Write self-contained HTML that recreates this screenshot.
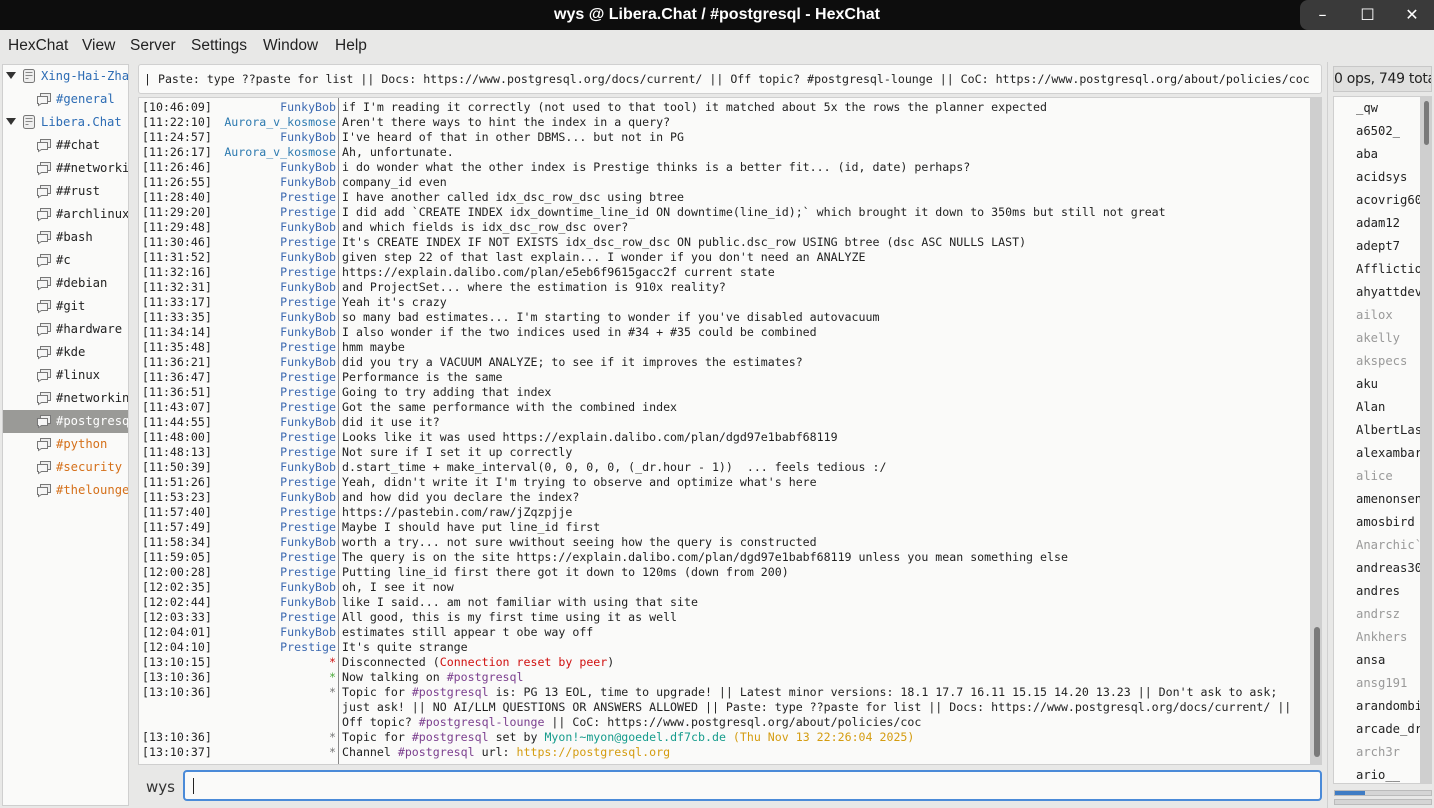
<!DOCTYPE html>
<html><head><meta charset="utf-8"><style>
*{margin:0;padding:0;box-sizing:border-box}
body{width:1434px;height:808px;overflow:hidden;background:#e8e8e7;font-family:"DejaVu Sans","Liberation Sans",sans-serif;position:relative}
.title{position:absolute;left:0;top:0;width:1434px;height:30px;background:#0d0d0d;color:#fff;font-size:16px;font-weight:bold;text-align:center;line-height:30px;font-family:"Liberation Sans",sans-serif}
.wbtn{position:absolute;top:0;width:45px;height:30px;background:#3a3a3a;color:#fff;text-align:center;line-height:30px;font-size:16px}
.menu{position:absolute;top:30px;left:0;width:1434px;height:32px;font-size:15.5px;color:#222;line-height:32px;font-family:"Liberation Sans",sans-serif}
.menu span{position:absolute}
.tree{position:absolute;left:2px;top:64px;width:127px;height:742px;background:#fafaf9;border:1px solid #cfcfcf;overflow:hidden;font-family:"DejaVu Sans Mono",monospace;font-size:12.2px}
.ti{position:absolute;height:23px;line-height:23px;white-space:nowrap;color:#222}
.ti svg{vertical-align:-4px;margin-right:4px}
.tri{display:inline-block;width:0;height:0;border-left:5px solid transparent;border-right:5px solid transparent;border-top:7px solid #333;margin:0 5px 1px 3px}
.topic{position:absolute;left:138px;top:64px;width:1184px;height:30px;background:#fafaf9;border:1px solid #d0d0d0;border-radius:3px;font-family:"DejaVu Sans Mono",monospace;font-size:11.6px;line-height:28px;padding-left:5px;white-space:nowrap;overflow:hidden;color:#222}
.chat{position:absolute;left:138px;top:97px;width:1173px;height:668px;background:#fafaf9;border:1px solid #cfcfcf;font-family:"DejaVu Sans Mono",monospace;font-size:11.6px;color:#222;overflow:hidden}
.sep{position:absolute;left:199px;top:0;width:1px;height:668px;background:#888}
.lines{position:absolute;left:3px;top:2px}
.r{height:15px;line-height:15px;white-space:pre;position:relative}
.t{position:absolute;left:0;width:70px}
.n{position:absolute;left:70px;width:124px;text-align:right}
.m{position:absolute;left:200px}
.b{color:#3b68b0}.a{color:#2d7ab0}.p{color:#7b3f8e}.red{color:#d01010}.g{color:#4caa3a}.y{color:#d49c10}.tq{color:#169c8c}
.vs{position:absolute;left:1311px;top:97px;width:11px;height:668px;background:#cfcfcf}
.vs i{position:absolute;left:3px;top:530px;width:6px;height:130px;background:#7a7a7a;border-radius:3px}
.wys{position:absolute;left:146px;top:778px;font-size:15px;color:#333}
.inp{position:absolute;left:183px;top:770px;width:1139px;height:31px;background:#fafaf9;border:2px solid #4a8ad8;border-radius:4px}
.inp i{position:absolute;left:8px;top:6px;width:1px;height:16px;background:#222}
.vline{position:absolute;left:1327px;top:62px;width:1px;height:746px;background:#d0d0d0}
.cnt{position:absolute;left:1333px;top:66px;width:99px;height:26px;background:#e0e0df;border:1px solid #c8c8c8;font-size:14px;line-height:24px;white-space:nowrap;overflow:hidden;color:#222;letter-spacing:-0.3px}
.ul{position:absolute;left:1333px;top:96px;width:88px;height:688px;background:#fafaf9;border:1px solid #cfcfcf;font-family:"DejaVu Sans Mono",monospace;font-size:12.2px;overflow:hidden}
.ul div{position:absolute;left:22px;white-space:nowrap;color:#222}
.ul .w{color:#999}
.us{position:absolute;left:1421px;top:96px;width:11px;height:688px;background:#cfcfcf}
.us i{position:absolute;left:3px;top:5px;width:5px;height:44px;background:#7a7a7a;border-radius:3px}
.pb{position:absolute;left:1334px;width:98px;height:6px;background:#d5d5d5;border:1px solid #bbb}
</style></head><body>
<svg width="0" height="0" style="position:absolute"><defs>
<symbol id="bub" viewBox="0 0 16 16"><path d="M4.5 2.5h10v8h-10z" fill="#eee" stroke="#777"/><path d="M1.5 5.5h10v7h-6l-3 2v-2h-1z" fill="#f6f6f6" stroke="#777"/></symbol>
<symbol id="srv" viewBox="0 0 16 16"><rect x="2.5" y="1.5" width="11" height="13" rx="2" fill="#eee" stroke="#777"/><path d="M4.5 4.5h7M4.5 7.5h7M4.5 10.5h3" stroke="#888"/></symbol>
</defs></svg>
<div class="title">wys @ Libera.Chat / #postgresql - HexChat</div>
<div class="wbtn" style="left:1300px;border-radius:8px 0 0 8px">&#8211;</div>
<div class="wbtn" style="left:1345px">&#9744;</div>
<div class="wbtn" style="left:1390px;width:44px">&#10005;</div>
<div class="menu"><span style="left:8px">HexChat</span><span style="left:82px">View</span><span style="left:130px">Server</span><span style="left:191px">Settings</span><span style="left:263px">Window</span><span style="left:335px">Help</span></div>

<div class="tree">
<div class="ti" style="left:0;top:0"><span class="tri"></span><svg width="16" height="16"><use href="#srv"/></svg><span style="color:#2d6cb4">Xing-Hai-Zhang</span></div>
<div class="ti" style="left:33px;top:23px"><svg width="16" height="16"><use href="#bub"/></svg><span style="color:#2d6cb4">#general</span></div>
<div class="ti" style="left:0;top:46px"><span class="tri"></span><svg width="16" height="16"><use href="#srv"/></svg><span style="color:#2d6cb4">Libera.Chat</span></div>
<div class="ti" style="left:33px;top:69px"><svg width="16" height="16"><use href="#bub"/></svg>##chat</div>
<div class="ti" style="left:33px;top:92px"><svg width="16" height="16"><use href="#bub"/></svg>##networking</div>
<div class="ti" style="left:33px;top:115px"><svg width="16" height="16"><use href="#bub"/></svg>##rust</div>
<div class="ti" style="left:33px;top:138px"><svg width="16" height="16"><use href="#bub"/></svg>#archlinux</div>
<div class="ti" style="left:33px;top:161px"><svg width="16" height="16"><use href="#bub"/></svg>#bash</div>
<div class="ti" style="left:33px;top:184px"><svg width="16" height="16"><use href="#bub"/></svg>#c</div>
<div class="ti" style="left:33px;top:207px"><svg width="16" height="16"><use href="#bub"/></svg>#debian</div>
<div class="ti" style="left:33px;top:230px"><svg width="16" height="16"><use href="#bub"/></svg>#git</div>
<div class="ti" style="left:33px;top:253px"><svg width="16" height="16"><use href="#bub"/></svg>#hardware</div>
<div class="ti" style="left:33px;top:276px"><svg width="16" height="16"><use href="#bub"/></svg>#kde</div>
<div class="ti" style="left:33px;top:299px"><svg width="16" height="16"><use href="#bub"/></svg>#linux</div>
<div class="ti" style="left:33px;top:322px"><svg width="16" height="16"><use href="#bub"/></svg>#networking</div>
<div class="ti" style="left:0;top:345px;width:127px;background:#9a9a97;color:#fff;padding-left:33px"><svg width="16" height="16"><use href="#bub"/></svg>#postgresql</div>
<div class="ti" style="left:33px;top:368px;color:#d5701a"><svg width="16" height="16"><use href="#bub"/></svg>#python</div>
<div class="ti" style="left:33px;top:391px;color:#d5701a"><svg width="16" height="16"><use href="#bub"/></svg>#security</div>
<div class="ti" style="left:33px;top:414px;color:#d5701a"><svg width="16" height="16"><use href="#bub"/></svg>#thelounge</div>
</div>

<div class="topic">| Paste: type ??paste for list || Docs: https://www.postgresql.org/docs/current/ || Off topic? #postgresql-lounge || CoC: https://www.postgresql.org/about/policies/coc</div>

<div class="chat"><div class="sep"></div><div class="lines">
<div class="r"><span class="t">[10:46:09]</span><span class="n b">FunkyBob</span><span class="m">if I'm reading it correctly (not used to that tool) it matched about 5x the rows the planner expected</span></div>
<div class="r"><span class="t">[11:22:10]</span><span class="n a">Aurora_v_kosmose</span><span class="m">Aren't there ways to hint the index in a query?</span></div>
<div class="r"><span class="t">[11:24:57]</span><span class="n b">FunkyBob</span><span class="m">I've heard of that in other DBMS... but not in PG</span></div>
<div class="r"><span class="t">[11:26:17]</span><span class="n a">Aurora_v_kosmose</span><span class="m">Ah, unfortunate.</span></div>
<div class="r"><span class="t">[11:26:46]</span><span class="n b">FunkyBob</span><span class="m">i do wonder what the other index is Prestige thinks is a better fit... (id, date) perhaps?</span></div>
<div class="r"><span class="t">[11:26:55]</span><span class="n b">FunkyBob</span><span class="m">company_id even</span></div>
<div class="r"><span class="t">[11:28:40]</span><span class="n b">Prestige</span><span class="m">I have another called idx_dsc_row_dsc using btree</span></div>
<div class="r"><span class="t">[11:29:20]</span><span class="n b">Prestige</span><span class="m">I did add `CREATE INDEX idx_downtime_line_id ON downtime(line_id);` which brought it down to 350ms but still not great</span></div>
<div class="r"><span class="t">[11:29:48]</span><span class="n b">FunkyBob</span><span class="m">and which fields is idx_dsc_row_dsc over?</span></div>
<div class="r"><span class="t">[11:30:46]</span><span class="n b">Prestige</span><span class="m">It's CREATE INDEX IF NOT EXISTS idx_dsc_row_dsc ON public.dsc_row USING btree (dsc ASC NULLS LAST)</span></div>
<div class="r"><span class="t">[11:31:52]</span><span class="n b">FunkyBob</span><span class="m">given step 22 of that last explain... I wonder if you don't need an ANALYZE</span></div>
<div class="r"><span class="t">[11:32:16]</span><span class="n b">Prestige</span><span class="m">https://explain.dalibo.com/plan/e5eb6f9615gacc2f current state</span></div>
<div class="r"><span class="t">[11:32:31]</span><span class="n b">FunkyBob</span><span class="m">and ProjectSet... where the estimation is 910x reality?</span></div>
<div class="r"><span class="t">[11:33:17]</span><span class="n b">Prestige</span><span class="m">Yeah it's crazy</span></div>
<div class="r"><span class="t">[11:33:35]</span><span class="n b">FunkyBob</span><span class="m">so many bad estimates... I'm starting to wonder if you've disabled autovacuum</span></div>
<div class="r"><span class="t">[11:34:14]</span><span class="n b">FunkyBob</span><span class="m">I also wonder if the two indices used in #34 + #35 could be combined</span></div>
<div class="r"><span class="t">[11:35:48]</span><span class="n b">Prestige</span><span class="m">hmm maybe</span></div>
<div class="r"><span class="t">[11:36:21]</span><span class="n b">FunkyBob</span><span class="m">did you try a VACUUM ANALYZE; to see if it improves the estimates?</span></div>
<div class="r"><span class="t">[11:36:47]</span><span class="n b">Prestige</span><span class="m">Performance is the same</span></div>
<div class="r"><span class="t">[11:36:51]</span><span class="n b">Prestige</span><span class="m">Going to try adding that index</span></div>
<div class="r"><span class="t">[11:43:07]</span><span class="n b">Prestige</span><span class="m">Got the same performance with the combined index</span></div>
<div class="r"><span class="t">[11:44:55]</span><span class="n b">FunkyBob</span><span class="m">did it use it?</span></div>
<div class="r"><span class="t">[11:48:00]</span><span class="n b">Prestige</span><span class="m">Looks like it was used https://explain.dalibo.com/plan/dgd97e1babf68119</span></div>
<div class="r"><span class="t">[11:48:13]</span><span class="n b">Prestige</span><span class="m">Not sure if I set it up correctly</span></div>
<div class="r"><span class="t">[11:50:39]</span><span class="n b">FunkyBob</span><span class="m">d.start_time + make_interval(0, 0, 0, 0, (_dr.hour - 1))  ... feels tedious :/</span></div>
<div class="r"><span class="t">[11:51:26]</span><span class="n b">Prestige</span><span class="m">Yeah, didn't write it I'm trying to observe and optimize what's here</span></div>
<div class="r"><span class="t">[11:53:23]</span><span class="n b">FunkyBob</span><span class="m">and how did you declare the index?</span></div>
<div class="r"><span class="t">[11:57:40]</span><span class="n b">Prestige</span><span class="m">https://pastebin.com/raw/jZqzpjje</span></div>
<div class="r"><span class="t">[11:57:49]</span><span class="n b">Prestige</span><span class="m">Maybe I should have put line_id first</span></div>
<div class="r"><span class="t">[11:58:34]</span><span class="n b">FunkyBob</span><span class="m">worth a try... not sure wwithout seeing how the query is constructed</span></div>
<div class="r"><span class="t">[11:59:05]</span><span class="n b">Prestige</span><span class="m">The query is on the site https://explain.dalibo.com/plan/dgd97e1babf68119 unless you mean something else</span></div>
<div class="r"><span class="t">[12:00:28]</span><span class="n b">Prestige</span><span class="m">Putting line_id first there got it down to 120ms (down from 200)</span></div>
<div class="r"><span class="t">[12:02:35]</span><span class="n b">FunkyBob</span><span class="m">oh, I see it now</span></div>
<div class="r"><span class="t">[12:02:44]</span><span class="n b">FunkyBob</span><span class="m">like I said... am not familiar with using that site</span></div>
<div class="r"><span class="t">[12:03:33]</span><span class="n b">Prestige</span><span class="m">All good, this is my first time using it as well</span></div>
<div class="r"><span class="t">[12:04:01]</span><span class="n b">FunkyBob</span><span class="m">estimates still appear t obe way off</span></div>
<div class="r"><span class="t">[12:04:10]</span><span class="n b">Prestige</span><span class="m">It's quite strange</span></div>
<div class="r"><span class="t">[13:10:15]</span><span class="n red">*</span><span class="m">Disconnected (<span class="red">Connection reset by peer</span>)</span></div>
<div class="r"><span class="t">[13:10:36]</span><span class="n g">*</span><span class="m">Now talking on <span class="p">#postgresql</span></span></div>
<div class="r"><span class="t">[13:10:36]</span><span class="n" style="color:#777">*</span><span class="m">Topic for <span class="p">#postgresql</span> is: PG 13 EOL, time to upgrade! || Latest minor versions: 18.1 17.7 16.11 15.15 14.20 13.23 || Don't ask to ask;</span></div>
<div class="r"><span class="m">just ask! || NO AI/LLM QUESTIONS OR ANSWERS ALLOWED || Paste: type ??paste for list || Docs: https://www.postgresql.org/docs/current/ ||</span></div>
<div class="r"><span class="m">Off topic? <span class="p">#postgresql-lounge</span> || CoC: https://www.postgresql.org/about/policies/coc</span></div>
<div class="r"><span class="t">[13:10:36]</span><span class="n" style="color:#777">*</span><span class="m">Topic for <span class="p">#postgresql</span> set by <span class="tq">Myon!~myon@goedel.df7cb.de</span> <span class="y">(Thu Nov 13 22:26:04 2025)</span></span></div>
<div class="r"><span class="t">[13:10:37]</span><span class="n" style="color:#777">*</span><span class="m">Channel <span class="p">#postgresql</span> url: <span class="y">https://postgresql.org</span></span></div>
</div></div>
<div class="vs"><i></i></div>
<div class="wys">wys</div>
<div class="inp"><i></i></div>

<div class="vline"></div>
<div class="cnt">0 ops, 749 total</div>
<div class="ul">
<div style="top:4px">_qw</div><div style="top:27px">a6502_</div><div style="top:50px">aba</div><div style="top:73px">acidsys</div><div style="top:96px">acovrig60</div><div style="top:119px">adam12</div><div style="top:142px">adept7</div><div style="top:165px">Affliction</div><div style="top:188px">ahyattdev</div><div class="w" style="top:211px">ailox</div><div class="w" style="top:234px">akelly</div><div class="w" style="top:257px">akspecs</div><div style="top:280px">aku</div><div style="top:303px">Alan</div><div style="top:326px">AlbertLast</div><div style="top:349px">alexambar</div><div class="w" style="top:372px">alice</div><div style="top:395px">amenonsen</div><div style="top:418px">amosbird</div><div class="w" style="top:441px">Anarchic`</div><div style="top:464px">andreas30</div><div style="top:487px">andres</div><div class="w" style="top:510px">andrsz</div><div class="w" style="top:533px">Ankhers</div><div style="top:556px">ansa</div><div class="w" style="top:579px">ansg191</div><div style="top:602px">arandombit</div><div style="top:625px">arcade_dr</div><div class="w" style="top:648px">arch3r</div><div style="top:671px">ario__</div>
</div>
<div class="us"><i></i></div>
<div class="pb" style="top:790px"><div style="width:30px;height:4px;background:#3f7cc4"></div></div>
<div class="pb" style="top:799px"></div>
</body></html>
